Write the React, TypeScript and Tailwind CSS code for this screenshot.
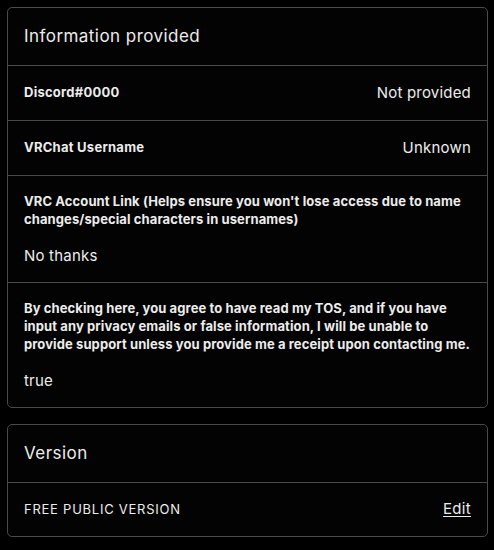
const font = { fontFamily: "Inter, 'Noto Sans', sans-serif" };

interface Answer {
  label: string;
  value: string;
  inline: boolean;
}

const answers: Answer[] = [
  { label: "Discord#0000", value: "Not provided", inline: true },
  { label: "VRChat Username", value: "Unknown", inline: true },
  {
    label:
      "VRC Account Link (Helps ensure you won't lose access due to name changes/special characters in usernames)",
    value: "No thanks",
    inline: false,
  },
  {
    label:
      "By checking here, you agree to have read my TOS, and if you have input any privacy emails or false information, I will be unable to provide support unless you provide me a receipt upon contacting me.",
    value: "true",
    inline: false,
  },
];

const AnswerRow = ({ answer }: { answer: Answer }) => {
  if (answer.inline) {
    return (
      <div className="flex h-[55px] items-center justify-between border-t border-[#4a4a4a] px-4">
        <span className="text-[13px] font-bold tracking-[0.25px] text-[#ececec]">{answer.label}</span>
        <span className="text-[15px] tracking-[0.2px] text-[#ececec]">{answer.value}</span>
      </div>
    );
  }
  return (
    <div className="border-t border-[#4a4a4a] px-4 pt-[16px] pb-[16px]">
      <p className="text-[13px] font-bold leading-[18px] tracking-[0.1px] text-[#ececec]">{answer.label}</p>
      <p className="mt-[18px] text-[15px] leading-[20px] tracking-[0.2px] text-[#ececec]">{answer.value}</p>
    </div>
  );
};

export default function App() {
  return (
    <div className="min-h-[550px] w-[494px] bg-black pt-[7px] pl-[7px]" style={font}>
      <div className="w-[481px] rounded-[5px] border border-[#4a4a4a] bg-[#030303]">
        <div className="flex h-[57px] items-center px-4">
          <h2 className="text-[17px] tracking-[0.45px] text-[#ececec]">Information provided</h2>
        </div>
        {answers.map((a) => (
          <AnswerRow key={a.label} answer={a} />
        ))}
      </div>

      <div className="mt-[16px] w-[481px] rounded-[5px] border border-[#4a4a4a] bg-[#030303]">
        <div className="flex h-[57px] items-center px-4">
          <h2 className="text-[17px] tracking-[0.45px] text-[#ececec]">Version</h2>
        </div>
        <div className="flex h-[54px] items-center justify-between border-t border-[#4a4a4a] px-4">
          <span className="text-[13px] tracking-[0.75px] text-[#ececec]">FREE PUBLIC VERSION</span>
          <a href="#" className="text-[15px] tracking-[0.3px] text-[#ececec] underline underline-offset-2">
            Edit
          </a>
        </div>
      </div>
    </div>
  );
}
